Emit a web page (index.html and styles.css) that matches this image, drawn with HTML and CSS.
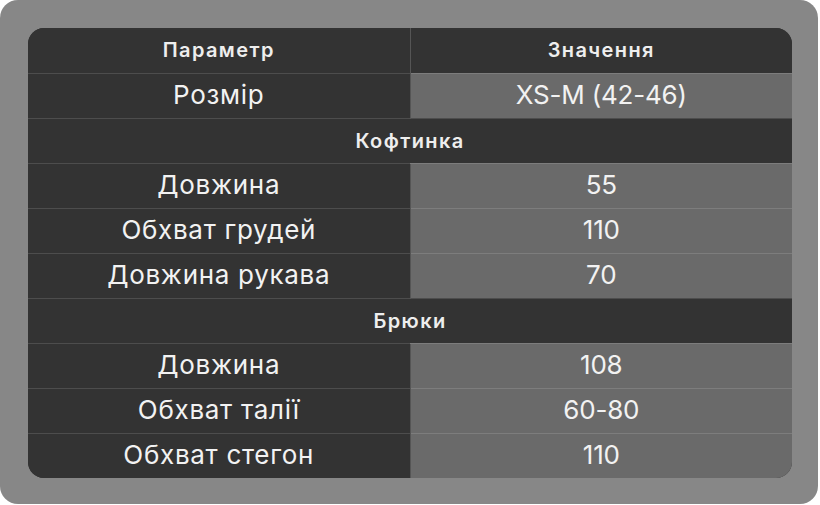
FILE: index.html
```html
<!DOCTYPE html>
<html lang="uk">
<head>
<meta charset="utf-8">
<link rel="stylesheet" href="styles.css">
</head>
<body>
<div class="frame">
  <div class="table-wrap">
    <table class="sizes">
      <thead>
        <tr><th>Параметр</th><th>Значення</th></tr>
      </thead>
      <tbody>
        <tr><td class="name">Розмір</td><td class="val">XS-M (42-46)</td></tr>
        <tr class="section"><td colspan="2">Кофтинка</td></tr>
        <tr><td class="name">Довжина</td><td class="val">55</td></tr>
        <tr><td class="name">Обхват грудей</td><td class="val">110</td></tr>
        <tr><td class="name">Довжина рукава</td><td class="val">70</td></tr>
        <tr class="section"><td colspan="2">Брюки</td></tr>
        <tr><td class="name">Довжина</td><td class="val">108</td></tr>
        <tr><td class="name">Обхват талії</td><td class="val">60-80</td></tr>
        <tr><td class="name">Обхват стегон</td><td class="val">110</td></tr>
      </tbody>
    </table>
  </div>
</div>
</body>
</html>
```

FILE: styles.css
```css
html, body {
  margin: 0;
  padding: 0;
  background: #ffffff;
}
body {
  font-family: Inter, "Open Sans", "Liberation Sans", sans-serif;
}
.frame {
  width: 818px;
  height: 504px;
  box-sizing: border-box;
  padding: 28px 26px 27px 28px;
  background: #878787;
  border-radius: 18px;
}
.table-wrap {
  width: 764px;
  border-radius: 16px;
  overflow: hidden;
  background: #333333;
}
.sizes {
  width: 100%;
  border-collapse: collapse;
  table-layout: fixed;
  color: #f2f2f2;
}
.sizes th,
.sizes td {
  height: 45px;
  padding: 0;
  text-align: center;
  vertical-align: middle;
  box-sizing: border-box;
}
.sizes th {
  font-size: 20px;
  font-weight: 600;
  letter-spacing: 1.4px;
  background: #333333;
  color: #eeeeee;
}
.sizes th + th {
  border-left: 1px solid #555555;
}
.sizes tbody tr td {
  border-top: 1px solid rgba(255, 255, 255, 0.13);
}
.sizes td.name {
  font-size: 26px;
  letter-spacing: 0.7px;
  padding-bottom: 2px;
  background: #333333;
}
.sizes td.val {
  font-size: 26px;
  letter-spacing: -0.2px;
  padding-bottom: 2px;
  background: #6a6a6a;
  border-left: 1px solid #555555;
}
.sizes tr.section td {
  font-size: 20px;
  font-weight: 600;
  letter-spacing: 1.4px;
  background: #333333;
  color: #eeeeee;
}
```
